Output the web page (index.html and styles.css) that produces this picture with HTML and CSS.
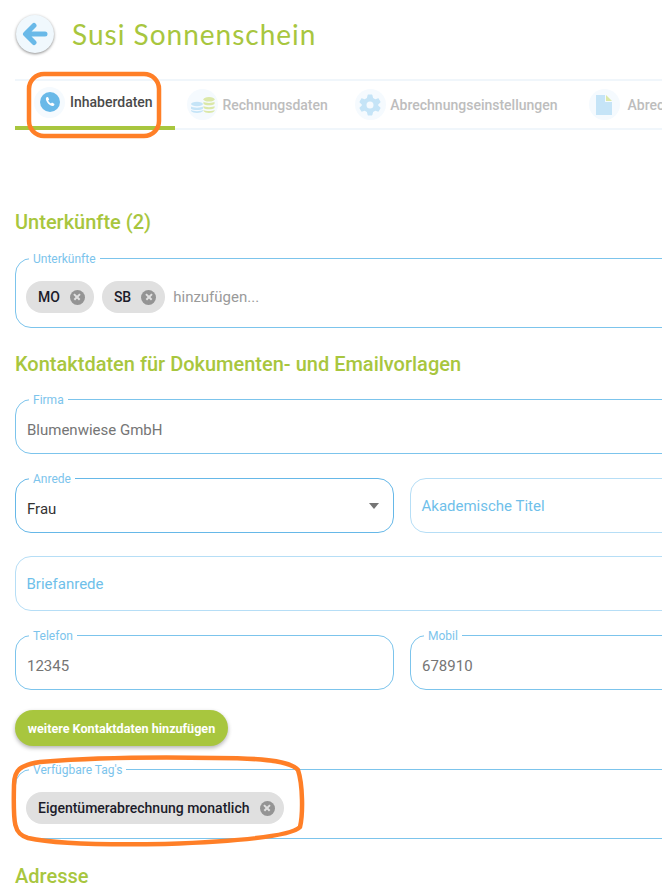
FILE: index.html
```
<!DOCTYPE html>
<html lang="de">
<head>
<meta charset="utf-8">
<title>Susi Sonnenschein</title>
<link rel="stylesheet" href="styles.css">
</head>
<body>
<div class="page">
  <header class="head">
    <button class="back" aria-label="Zurück">
      <svg width="26" height="24" viewBox="0 0 26 24"><path d="M12 3.500 3.500 12l8.500 8.500M5 12h18" fill="none" stroke="#69b9e8" stroke-width="5" stroke-linecap="round" stroke-linejoin="round"/></svg>
    </button>
    <h1 class="title">Susi Sonnenschein</h1>
  </header>

  <nav class="tabs">
    <div class="tab tab-active">
      <span class="tab-icon"><svg width="20" height="20" viewBox="0 0 20 20"><circle cx="10" cy="10" r="10" fill="#69b9e8"/><path d="M6.600 5.200 8 4.900l1.200 2.600-1 .9c.5 1.300 1.500 2.400 2.800 3l1-.9 2.500 1.400-.4 1.400c-.2.6-.8.9-1.400.8-3.300-.6-6.200-3.600-6.800-6.800-.1-.6.2-1.900.7-2.100z" fill="#fff"/></svg></span>
      <span>Inhaberdaten</span>
    </div>
    <div class="tab">
      <span class="tab-icon"><svg width="24" height="16" viewBox="0 0 24 16"><g fill="#c5e4f7"><ellipse cx="6" cy="7" rx="6" ry="2.200"/><path d="M0 9.500c1.500 1.500 10.500 1.500 12 0v2.200c-1.500 1.700-10.500 1.700-12 0zM0 13c1.500 1.500 10.500 1.500 12 0v1c-1.500 2.600-10.500 2.600-12 0z"/></g><g fill="#dbe8a8"><ellipse cx="18" cy="2.300" rx="5.500" ry="2.300"/><path d="M12.500 4.800c1.500 1.500 9.500 1.500 11 0v2.200c-1.500 1.700-9.500 1.700-11 0zM12.500 9c1.500 1.500 9.500 1.500 11 0v2c-1.500 1.700-9.500 1.700-11 0zM12.500 13c1.500 1.300 9.500 1.300 11 0v1c-1.500 2.600-9.500 2.600-11 0z"/></g></svg></span>
      <span>Rechnungsdaten</span>
    </div>
    <div class="tab">
      <span class="tab-icon"><svg width="22" height="22" viewBox="0 0 22 22"><path d="M8.500 1.500c0-.5.5-1 1-1h3c.5 0 1 .5 1 1l.6 2.500 2.200 1.200 2.400-.8c.5-.1 1 0 1.200.5l1.500 2.600c.2.400.1 1-.3 1.300l-1.900 1.700v1l1.900 1.700c.4.300.5.900.3 1.300l-1.500 2.600c-.2.500-.7.600-1.200.5l-2.400-.8-2.200 1.200-.6 2.500c0 .5-.5 1-1 1h-3c-.5 0-1-.5-1-1l-.6-2.500-2.200-1.200-2.400.8c-.5.1-1 0-1.200-.5L.6 14.500c-.2-.4-.1-1 .3-1.300l1.900-1.700v-1L.9 8.800C.5 8.500.4 7.900.6 7.500l1.500-2.600c.2-.5.7-.6 1.200-.5l2.400.8L7.900 4zM11 7.500a3.500 3.500 0 1 0 0 7 3.500 3.500 0 0 0 0-7z" fill="#c5e4f7" fill-rule="evenodd"/></svg></span>
      <span>Abrechnungseinstellungen</span>
    </div>
    <div class="tab tab-last">
      <span class="tab-icon"><svg width="16" height="20" viewBox="0 0 16 20"><path d="M0 0h9v7h7v13H0z" fill="#c5e4f7"/><path d="M10 0l6 6h-6z" fill="#dbe8a8"/></svg></span>
      <span>Abrechnungen</span>
    </div>
  </nav>

  <h2 class="section section-first">Unterkünfte (2)</h2>
  <div class="field field-chips">
    <span class="legend">Unterkünfte</span>
    <span class="chip">MO <span class="chip-x"></span></span>
    <span class="chip">SB <span class="chip-x"></span></span>
    <span class="hint">hinzufügen...</span>
  </div>

  <h2 class="section section-contact">Kontaktdaten für Dokumenten- und Emailvorlagen</h2>
  <div class="field field-firma">
    <span class="legend">Firma</span>
    <span class="value">Blumenwiese GmbH</span>
  </div>
  <div class="row">
    <div class="field field-half field-dark">
      <span class="legend">Anrede</span>
      <span class="value value-dark">Frau</span>
      <span class="caret"></span>
    </div>
    <div class="field field-half field-empty">
      <span class="placeholder">Akademische Titel</span>
    </div>
  </div>
  <div class="field field-empty field-gap">
    <span class="placeholder">Briefanrede</span>
  </div>
  <div class="row">
    <div class="field field-half">
      <span class="legend">Telefon</span>
      <span class="value">12345</span>
    </div>
    <div class="field field-half">
      <span class="legend">Mobil</span>
      <span class="value">678910</span>
    </div>
  </div>
  <button class="add">weitere Kontaktdaten hinzufügen</button>
  <div class="field field-chips field-tags">
    <span class="legend">Verfügbare Tag's</span>
    <span class="chip">Eigentümerabrechnung monatlich <span class="chip-x"></span></span>
  </div>
  <h2 class="section section-address">Adresse</h2>
</div>

<svg class="marks" width="662" height="883" viewBox="0 0 662 883" aria-hidden="true">
  <rect x="29" y="74" width="130" height="62" rx="15" fill="none" stroke="#ff7f27" stroke-width="4.500"/>
  <path d="M14 785C14 770 20 765 40 762C100 757 160 757 215 758C255 758 290 760 298 770C303 785 303 815 300 827C290 838 220 842 165 844C110 845 55 844 28 838C14 834 13 825 14 785Z" fill="none" stroke="#ff7f27" stroke-width="4.500"/>
</svg>
</body>
</html>
```
FILE: styles.css
```
* { box-sizing: border-box; }
html, body { margin: 0; padding: 0; height: 883px; overflow: hidden; background: #fff; }
body { font-family: Roboto, "Liberation Sans", sans-serif; position: relative; }
.page { width: 790px; padding: 0 0 0 15px; }

.head { display: flex; align-items: center; height: 79px; padding: 0 0 11px 1px; }
.back { width: 38px; height: 38px; border-radius: 50%; border: 0; padding: 0; background: #f0f8fd; box-shadow: 0 1px 3px rgba(0,0,0,.45); display: flex; align-items: center; justify-content: center; }
.title { margin: 0 0 0 18px; font: 400 28px Lato, sans-serif; letter-spacing: 1px; color: #a8c63e; }

.tabs { display: flex; height: 51px; width: 775px; border-top: 2px solid #f0f6fb; border-bottom: 2px solid #f0f6fb; }
.tab { display: flex; align-items: center; gap: 4.500px; height: 47px; padding: 0 15px 0 12px; font-size: 14px; font-weight: 500; color: #bdbdbd; white-space: nowrap; }
.tab-active { width: 160px; height: 49px; color: #4a4a4a; border-bottom: 4px solid #a8c63e; padding: 0 0 3px 19px; gap: 5px; }
.tab-last { margin-left: 4px; gap: 8px; }
.tab-icon { width: 31px; height: 31px; border-radius: 50%; background: #f5fafe; display: flex; align-items: center; justify-content: center; flex: none; }

.section { margin: 0; font-size: 20px; font-weight: 500; line-height: 24px; color: #a8c63e; }
.section-first { margin-top: 80px; }
.section-contact { margin-top: 24px; }
.section-address { margin-top: 25px; }

.field { position: relative; display: flex; align-items: center; gap: 8px; height: 55px; margin-top: 24px; padding: 0 11px 0; border: 1px solid #7cc4ec; border-radius: 16px; width: 775px; }
.field-chips { height: 70px; margin-top: 24px; padding: 8px 10px 0; }
.field-firma { margin-top: 23px; }
.field-half { width: 379px; margin-top: 0; }
.field-dark { border-color: #66b8e8; }
.field-empty { border-color: #b6def6; }
.field-gap { margin-top: 23px; }
.field-tags { margin-top: 23px; }

.legend { position: absolute; left: 13px; top: -7px; padding: 0 4px; background: #fff; font-size: 12px; line-height: 14px; color: #7cc4ec; }
.value { padding-top: 7px; font-size: 15px; color: #757575; }
.value-dark { color: #333; }
.placeholder { margin-left: -.5px; font-size: 15px; color: #6fbfea; }
.hint { font-size: 15px; color: #9a9a9a; }
.caret { position: absolute; right: 14px; top: 24px; border: 5px solid transparent; border-top: 6px solid #757575; border-bottom: 0; }

.row { display: flex; gap: 16px; margin-top: 24px; width: 775px; }

.chip { display: inline-flex; align-items: center; justify-content: space-between; gap: 10px; height: 32px; padding: 0 9px 0 12px; border-radius: 16px; background: #e0e0e0; font-size: 14px; font-weight: 500; color: #1c1c2a; white-space: nowrap; }
.chip-x { position: relative; width: 15px; height: 15px; border-radius: 50%; background: #949494; flex: none; }
.chip-x::before, .chip-x::after { content: ""; position: absolute; left: 3.500px; top: 6.750px; width: 8px; height: 1.500px; background: #e0e0e0; transform: rotate(45deg); }
.chip-x::after { transform: rotate(-45deg); }

.add { display: block; height: 36px; width: 213px; margin-top: 20px; padding: 0; border: 0; border-radius: 18px; background: #a8c63e; box-shadow: 0 2px 4px rgba(0,0,0,.3); color: #fff; font: 700 12.600px Roboto, sans-serif; }

.marks { position: absolute; left: 0; top: 0; pointer-events: none; }
```
